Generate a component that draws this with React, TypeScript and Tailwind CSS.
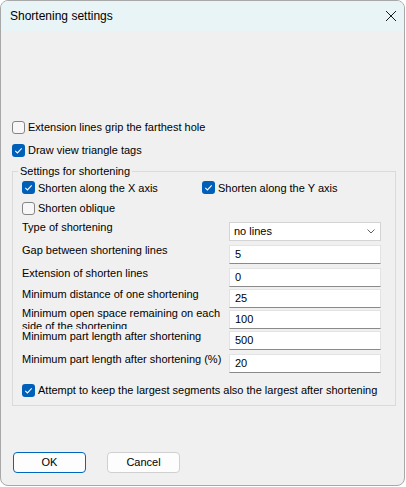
import React from "react";

const font = { fontFamily: '"Liberation Sans", Arial, sans-serif' };

type BoxProps = { checked?: boolean; label: string; className?: string };

// small Win11-style checkbox with label
const Check = ({ checked, label, className = "" }: BoxProps) => (
  <div className={`flex items-center ${className}`}>
    {checked ? (
      <div className="w-[13px] h-[13px] rounded-[3px] bg-[#005fb8] flex items-center justify-center">
        <svg width="13" height="13" viewBox="0 0 13 13">
          <path d="M3.3 6.9 L5.4 8.9 L9.7 4.3" fill="none" stroke="#fff" strokeWidth="1.1" />
        </svg>
      </div>
    ) : (
      <div className="w-[13px] h-[13px] rounded-[3px] border border-[#858585] bg-[#f7f7f7]" />
    )}
    <span className="ml-[3px] text-[11px] text-black leading-[14px]">{label}</span>
  </div>
);

const Field = ({ value }: { value: string }) => (
  <div className="w-[152px] h-[19px] bg-white border border-[#e3e3e3] border-b-[#8a8a8a] flex items-center pl-[5px] text-[11px] text-black">
    {value}
  </div>
);

type RowProps = { label: React.ReactNode; children: React.ReactNode; className?: string; tall?: boolean };

const Row = ({ label, children, className = "", tall }: RowProps) => (
  <div className={`flex items-start ${className}`}>
    <div
      className={
        tall
          ? "w-[207px] h-[22px] -mt-[3px] overflow-hidden text-[11px] leading-[13px] text-black"
          : "w-[207px] -mt-[3px] text-[11px] leading-[16px] text-black"
      }
    >
      {label}
    </div>
    {children}
  </div>
);

export default function App() {
  return (
    <div className="w-[406px] h-[487px] bg-white" style={font}>
      <div className="w-[405px] h-[486px] rounded-[8px] border border-[#a8a8a8] bg-[#f0f0f0] overflow-hidden flex flex-col">
        {/* title bar */}
        <div className="h-[30px] bg-[#e9f4f6] flex items-center justify-between pl-[9px] pr-[7px]">
          <span className="text-[12px] text-black">Shortening settings</span>
          <svg width="12" height="12" viewBox="0 0 12 12">
            <path d="M1 1 L11 11 M11 1 L1 11" stroke="#1a1a1a" strokeWidth="1" />
          </svg>
        </div>

        <div className="flex flex-col pl-[11px]">
          <Check label="Extension lines grip the farthest hole" className="h-[20px] mt-[86px]" />
          <Check checked label="Draw view triangle tags" className="h-[20px] mt-[3px]" />

          <fieldset className="mt-[3px] w-[384px] border border-[#dadada] pl-[9px] pr-[13px] pb-[5px]">
            <legend className="-ml-[4px] px-[2px] text-[11px] leading-[16px] text-black">
              Settings for shortening
            </legend>
            <div className="flex h-[17px] items-center">
              <Check checked label="Shorten along the X axis" className="w-[180px]" />
              <Check checked label="Shorten along the Y axis" />
            </div>
            <Check label="Shorten oblique" className="h-[20px] mt-[2px]" />

            <Row label="Type of shortening" className="mt-[4px]">
              <div className="w-[152px] h-[19px] bg-white border border-[#d4d4d4] flex items-center justify-between pl-[4px] pr-[5px] text-[11px] text-black">
                <span>no lines</span>
                <svg width="8" height="5" viewBox="0 0 8 5">
                  <path d="M0.5 0.5 L4 4 L7.5 0.5" fill="none" stroke="#606060" strokeWidth="1" />
                </svg>
              </div>
            </Row>
            <Row label="Gap between shortening lines" className="mt-[4px]">
              <Field value="5" />
            </Row>
            <Row label="Extension of shorten lines" className="mt-[4px]">
              <Field value="0" />
            </Row>
            <Row label="Minimum distance of one shortening" className="mt-[2px]">
              <Field value="25" />
            </Row>
            <Row
              tall
              label={
                <>
                  Minimum open space remaining on each
                  <br />
                  side of the shortening
                </>
              }
              className="mt-[2px]"
            >
              <Field value="100" />
            </Row>
            <Row label="Minimum part length after shortening" className="mt-[2px]">
              <Field value="500" />
            </Row>
            <Row label="Minimum part length after shortening (%)" className="mt-[4px]">
              <Field value="20" />
            </Row>

            <Check
              checked
              label="Attempt to keep the largest segments also the largest after shortening"
              className="h-[20px] mt-[7px]"
            />
          </fieldset>

          <div className="flex mt-[46px] ml-[1px] gap-[21px]">
            <button className="w-[73px] h-[21px] rounded-[4px] border border-[#0067c0] bg-[#fdfdfd] text-[11px] text-black">
              OK
            </button>
            <button className="w-[73px] h-[21px] rounded-[4px] border border-[#d0d0d0] bg-[#fdfdfd] text-[11px] text-black">
              Cancel
            </button>
          </div>
        </div>
      </div>
    </div>
  );
}
